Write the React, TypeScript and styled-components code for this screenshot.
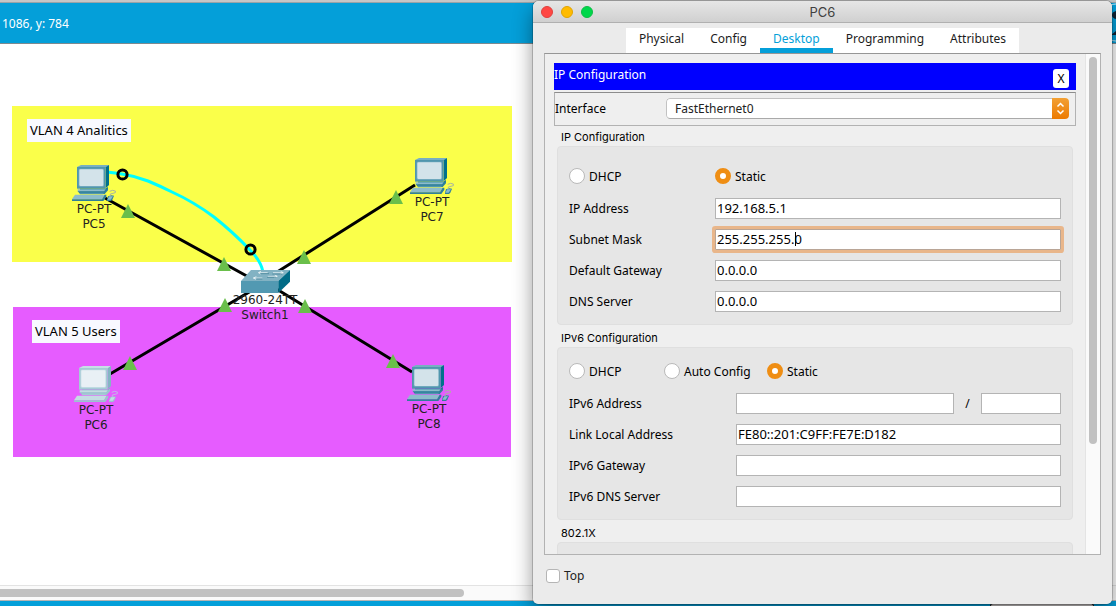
import React from "react";
import styled, { createGlobalStyle } from "styled-components";

const ORANGE = "#ef8e14";
const BLUE = "#049fd9";

const GlobalStyle = createGlobalStyle`
  * { box-sizing: border-box; }
  html, body { margin: 0; overflow: hidden; }
  body, button, input, select {
    font-family: "Noto Sans", "Open Sans", sans-serif;
    font-size: 12px;
    line-height: 15px;
    color: #000;
  }
`;

/* ---------- Workspace behind the dialog ---------- */

const Desktop = styled.div`
  position: relative;
  display: flex;
  flex-direction: column;
  height: 100vh;
  overflow: hidden;
  background: #fff;
`;

const TopEdge = styled.div`
  height: 3px;
  background: #c6c6c6;
  border-bottom: 1px solid #9aa3a8;
`;

const CoordinateBar = styled.header`
  display: flex;
  align-items: center;
  justify-content: space-between;
  height: 41px;
  padding-left: 2px;
  background: ${BLUE};
  border-bottom: 1px solid #7d8a90;
  color: #fff;
`;

const Canvas = styled.main`
  position: relative;
  flex: 1;
  min-height: 0;
  overflow: hidden;
  background: #fff;
`;

const HorizontalTrack = styled.div`
  display: flex;
  align-items: center;
  height: 16px;
  background: #fafafa;
  border-top: 1px solid #e3e3e3;
  border-bottom: 1px solid #b5b5b5;
`;

const HorizontalThumb = styled.div`
  width: 464px;
  height: 8px;
  border-radius: 0 4px 4px 0;
  background: #c1c1c1;
`;

const DeviceBar = styled.footer`
  display: flex;
  justify-content: flex-end;
  height: 5px;
  padding-right: 22px;
  background: ${BLUE};
`;

const DeviceTile = styled.div`
  width: 104px;
  margin-top: 2px;
  border: 1px solid #222;
  border-bottom: 0;
  border-radius: 3px 3px 0 0;
  background: #c9c5c5;
`;

const Zone = styled.div<{ $x: number; $y: number; $w: number; $h: number; $color: string }>`
  position: absolute;
  left: ${(p) => p.$x}px;
  top: ${(p) => p.$y}px;
  width: ${(p) => p.$w}px;
  height: ${(p) => p.$h}px;
  background: ${(p) => p.$color};
`;

const ZoneLabel = styled.div<{ $x: number; $y: number }>`
  position: absolute;
  left: ${(p) => p.$x}px;
  top: ${(p) => p.$y}px;
  padding: 4px 3px;
  background: #f8f9ff;
  font-size: 13px;
  line-height: 15px;
  white-space: nowrap;
`;

const Layer = styled.svg`
  position: absolute;
  left: 0;
  top: 0;
`;

const NodeBox = styled.div<{ $x: number; $y: number }>`
  position: absolute;
  left: ${(p) => p.$x}px;
  top: ${(p) => p.$y}px;
  display: flex;
  flex-direction: column;
  align-items: center;
  width: 80px;
  margin-left: -40px;
  font-family: "DejaVu Sans", sans-serif;
  font-size: 12px;
  line-height: 15px;
  color: #222;
  text-align: center;
  white-space: nowrap;
  svg { display: block; }
`;

function PcIcon({ faded }: { faded?: boolean }) {
  const c = faded
    ? { top: "#c6dfe6", frame: "#a6cbd5", screen: "#e9f0f5", side: "#84b5c3", key: "#c5dce3", edge: "#9cc4cf", cable: "#c3b5e8" }
    : { top: "#78afc2", frame: "#5096ae", screen: "#d3e3ea", side: "#00708c", key: "#8dbccb", edge: "#2f7f9b", cable: "#a9b5a0" };
  return (
    <svg width="44" height="37" viewBox="0 0 132 111">
      <path d="M15 6 27 0H111L101 8H15Z" fill={c.top} />
      <path d="M101 7 111 0V60L101 70Z" fill={c.side} />
      <rect x="15" y="6" width="86" height="65" fill={c.frame} />
      <rect x="20" y="11" width="76" height="54" rx="4" fill={c.top} />
      <rect x="22" y="13" width="72" height="50" rx="4" fill={c.screen} />
      <path d="M24 71H101L108 66V72L99 80H24Z" fill={c.side} />
      <path d="M17 73H102L96 80H17Z" fill={c.key} />
      <path d="M17 79H96L108 68V76L98 87H24Z" fill={c.edge} />
      <path d="M24 83H97L92 88H24Z" fill={c.frame} />
      <path d="M9 89H98L90 103H0Z" fill={c.key} />
      <path d="M0 103H90L98 89H103V95L94 108H0Z" fill={c.edge} />
      <path d="M108 94 118 91 126 92 121 104 117 108H105V104Z" fill={c.edge} />
      <path d="M112 94H123L116 104H106Z" fill={c.key} />
      <path d="M115 92V87L130 83V78L122 76 113 79" fill="none" stroke={c.cable} strokeWidth="3" />
    </svg>
  );
}

function SwitchIcon() {
  return (
    <svg width="49" height="23" viewBox="0 0 147 69">
      <path d="M0 33 30 0H147L112 33Z" fill="#82b2c3" />
      <path d="M0 33H112V69H0Z" fill="#5299b2" />
      <path d="M112 33 147 0V35L112 69Z" fill="#006b87" />
      <g stroke="#fff" strokeWidth="2" fill="none">
        <path d="M80 8H54M60 4 52 8 59 12" />
        <path d="M96 8H126M119 4 127 8 118 12" />
        <path d="M80 19H108M101 15 109 19 100 23" />
        <path d="M64 24H38M46 20 37 24 45 28" />
      </g>
      <path d="M84 11H58M124 12H94M106 22H78M64 27H46" stroke="#3d7c91" strokeWidth="2" />
    </svg>
  );
}

const pcs = [
  { x: 94, y: 121, name: "PC5" },
  { x: 432, y: 114, name: "PC7" },
  { x: 96, y: 322, name: "PC6", faded: true },
  { x: 429, y: 321, name: "PC8" },
];

const arrows = [
  [128, 167], [224, 220], [396, 153], [304, 213],
  [130, 319], [225, 261], [393, 317], [305, 262],
];

function Topology() {
  return (
    <Canvas>
      <Zone $x={12} $y={62} $w={500} $h={156} $color="#faff4a" />
      <Zone $x={13} $y={263} $w={498} $h={150} $color="#e65cff" />
      <ZoneLabel $x={27} $y={75}>VLAN 4 Analitics</ZoneLabel>
      <ZoneLabel $x={32} $y={276}>VLAN 5 Users</ZoneLabel>
      <Layer width="532" height="420" aria-hidden="true">
        <g stroke="#000" strokeWidth="3">
          <path d="M105 154 254 236M415 141 274 230M110 330 256 244M412 328 270 241" />
        </g>
        <path
          d="M107 128 115 129 122 130Q135 132 148 137 160 142 172 148 194 158 214 173 234 189 250 206 261 217 263 228"
          fill="none"
          stroke="#00ffff"
          strokeWidth="3"
        />
      </Layer>
      {pcs.map((pc) => (
        <NodeBox key={pc.name} $x={pc.x} $y={pc.y}>
          <PcIcon faded={pc.faded} />
          <span>PC-PT</span>
          <span>{pc.name}</span>
        </NodeBox>
      ))}
      <NodeBox $x={265} $y={226}>
        <SwitchIcon />
        <span>2960-24TT</span>
        <span>Switch1</span>
      </NodeBox>
      <Layer width="532" height="420" aria-hidden="true">
        {arrows.map(([x, y]) => (
          <path key={`${x}-${y}`} d={`M${x} ${y - 7}l7 14h-14z`} fill="#6abf4b" />
        ))}
        <g fill="none" stroke="#000" strokeWidth="3">
          <circle cx="122.5" cy="130.5" r="4.6" />
          <circle cx="250.5" cy="205.5" r="4.6" />
        </g>
      </Layer>
    </Canvas>
  );
}

/* ---------- Device dialog ---------- */

const Window = styled.section`
  position: absolute;
  left: 533px;
  right: 4px;
  top: 1px;
  bottom: 2px;
  display: flex;
  flex-direction: column;
  border-radius: 6px 6px 5px 5px;
  overflow: hidden;
  background: #ebebeb;
`;

const WindowShadow = styled.div`
  position: absolute;
  left: 533px;
  right: 4px;
  top: 1px;
  bottom: 2px;
  border-radius: 6px;
  box-shadow: 0 0 0 1px rgba(0, 0, 0, 0.18), 0 9px 20px rgba(0, 0, 0, 0.42);
`;

const TitleBar = styled.div`
  display: grid;
  grid-template-columns: 1fr auto 1fr;
  align-items: center;
  height: 22px;
  padding: 0 8px;
  background: linear-gradient(#e6e6e6, #d0d0d0);
  border-bottom: 1px solid #b0b0b0;
`;

const Lights = styled.div`
  display: flex;
  gap: 8px;
`;

const Light = styled.button<{ $color: string; $edge: string }>`
  width: 12px;
  height: 12px;
  padding: 0;
  border: 1px solid ${(p) => p.$edge};
  border-radius: 50%;
  background: ${(p) => p.$color};
`;

const Title = styled.h1`
  margin: 0;
  font: 400 13px/16px Inter, sans-serif;
  color: #404040;
`;

const Tabs = styled.nav`
  display: flex;
  align-self: center;
  margin-top: 5px;
  background: #fff;
`;

const Tab = styled.button<{ $active?: boolean }>`
  height: 25px;
  padding: 0 13px;
  border: 0;
  border-bottom: 5px solid ${(p) => (p.$active ? BLUE : "transparent")};
  background: transparent;
  color: ${(p) => (p.$active ? BLUE : "#1c1c1c")};
`;

const Panel = styled.div`
  display: flex;
  flex: 1;
  min-height: 0;
  margin: 0 11px;
  border: 1px solid #b2b2b2;
  border-top-color: #969696;
  background: #efefef;
  overflow: hidden;
`;

const PanelBody = styled.div`
  flex: 1;
  min-width: 0;
  padding: 9px;
  overflow: hidden;
`;

const VerticalTrack = styled.div`
  width: 15px;
  padding: 3px;
  background: #fafafa;
  border-left: 1px solid #e4e4e4;
`;

const VerticalThumb = styled.div`
  width: 8px;
  height: 387px;
  border-radius: 4px;
  background: #c1c1c1;
`;

const ConfigBar = styled.div`
  display: flex;
  justify-content: space-between;
  height: 27px;
  padding-right: 7px;
  background: #0000ff;
  color: #fff;
`;

const ConfigTitle = styled.h2`
  margin: 4px 0 0;
  font-size: 12px;
  font-weight: 400;
  line-height: 15px;
`;

const CloseButton = styled.button`
  align-self: flex-end;
  width: 16px;
  height: 19px;
  margin-bottom: 2px;
  padding: 0;
  border: 0;
  border-radius: 3px;
  background: #fff;
`;

const InterfaceRow = styled.div`
  display: flex;
  align-items: center;
  height: 34px;
  margin-top: 2px;
  padding: 0 6px 2px 0;
  border: 1px solid #b2b2b2;
  border-top-color: #8c8c8c;
`;

const InterfaceLabel = styled.label`
  width: 111px;
`;

const SelectFrame = styled.div`
  display: flex;
  flex: 1;
  height: 21px;
  border-radius: 4px;
  overflow: hidden;
  background: #fff;
`;

const InterfaceSelect = styled.select`
  flex: 1;
  appearance: none;
  padding: 0 8px;
  border: 1px solid #c2c2c2;
  border-bottom-color: #a9a9a9;
  border-right: 0;
  border-radius: 4px 0 0 4px;
  background: #fff;
  color: #222;
`;

const SelectArrows = styled.svg`
  width: 17px;
  height: 21px;
  background: linear-gradient(#f2a035, #ec7a00);
`;

const GroupTitle = styled.h3`
  margin: 0 7px;
  padding: 3px 0 1px;
  font: 400 11px/16px Inter, sans-serif;
`;

const Group = styled.div<{ $top?: number }>`
  display: grid;
  gap: 10px;
  margin: 0 3px 2px;
  padding: ${(p) => p.$top ?? 12}px 11px 12px;
  background: #e6e6e6;
  border: 1px solid #dfdfdf;
  border-radius: 4px;
`;

const RadioRow = styled.div<{ $columns: string }>`
  display: grid;
  grid-template-columns: ${(p) => p.$columns};
  align-items: center;
  height: 24px;
`;

const RadioLabel = styled.label`
  display: flex;
  align-items: center;
  gap: 4px;
`;

const Radio = styled.input.attrs({ type: "radio" })`
  appearance: none;
  width: 16px;
  height: 16px;
  margin: 0;
  border: 1px solid #b9b9b9;
  border-radius: 50%;
  background: #fff;
  &:checked {
    border: 5px solid ${ORANGE};
  }
`;

const FieldRow = styled.div<{ $label: number }>`
  display: grid;
  grid-template-columns: ${(p) => p.$label}px 1fr;
  align-items: center;
  height: 21px;
`;

const TextInput = styled.input<{ $focused?: boolean }>`
  display: block;
  width: 100%;
  height: 21px;
  padding: 0 1px 2px;
  border: 1px solid ${(p) => (p.$focused ? "#b9a596" : "#b4b4b4")};
  border-radius: 0;
  outline: none;
  background: #fff;
  font-size: 13px;
  ${(p) => p.$focused && "box-shadow: 0 0 0 3px #e9b68a; border-radius: 1px;"}
`;

const CaretHost = styled.div`
  position: relative;
`;

const Caret = styled.span`
  position: absolute;
  left: 80px;
  top: 3px;
  width: 1px;
  height: 14px;
  background: #000;
`;

const PrefixFields = styled.div`
  display: grid;
  grid-template-columns: 1fr 27px 80px;
  text-align: center;
  align-items: center;
`;

const Footer = styled.div`
  display: flex;
  align-items: center;
  height: 49px;
  padding: 0 13px 8px;
`;

const CheckLabel = styled.label`
  display: flex;
  align-items: center;
  gap: 4px;
  color: #222;
`;

const Checkbox = styled.input.attrs({ type: "checkbox" })`
  appearance: none;
  width: 14px;
  height: 14px;
  margin: 0;
  border: 1px solid #b5b5b5;
  border-radius: 3px;
  background: #fff;
`;

interface FieldProps {
  id: string;
  label: string;
  value?: string;
  labelWidth: number;
  focused?: boolean;
}

function Field({ id, label, value = "", labelWidth, focused }: FieldProps) {
  return (
    <FieldRow $label={labelWidth}>
      <label htmlFor={id}>{label}</label>
      <CaretHost>
        <TextInput id={id} type="text" defaultValue={value} $focused={focused} />
        {focused && <Caret />}
      </CaretHost>
    </FieldRow>
  );
}

function DeviceWindow() {
  return (
    <Window aria-label="PC6">
      <TitleBar>
        <Lights>
          <Light $color="#ff4744" $edge="#e0403d" aria-label="Close" />
          <Light $color="#ffbb00" $edge="#e0a400" aria-label="Minimize" />
          <Light $color="#00d74b" $edge="#0dbd45" aria-label="Zoom" />
        </Lights>
        <Title>PC6</Title>
      </TitleBar>
      <Tabs>
        <Tab>Physical</Tab>
        <Tab>Config</Tab>
        <Tab $active>Desktop</Tab>
        <Tab>Programming</Tab>
        <Tab>Attributes</Tab>
      </Tabs>
      <Panel>
        <PanelBody>
          <ConfigBar>
            <ConfigTitle>IP Configuration</ConfigTitle>
            <CloseButton>X</CloseButton>
          </ConfigBar>
          <InterfaceRow>
            <InterfaceLabel htmlFor="interface">Interface</InterfaceLabel>
            <SelectFrame>
              <InterfaceSelect id="interface">
                <option>FastEthernet0</option>
              </InterfaceSelect>
              <SelectArrows viewBox="0 0 17 21" aria-hidden="true">
                <path d="M5.5 8.5 8.5 5.5 11.5 8.5M5.5 12.5 8.5 15.5 11.5 12.5" fill="none" stroke="#fff" strokeWidth="1.5" />
              </SelectArrows>
            </SelectFrame>
          </InterfaceRow>

          <GroupTitle>IP Configuration</GroupTitle>
          <Group $top={17}>
            <RadioRow $columns="146px 1fr">
              <RadioLabel><Radio name="ipv4" />DHCP</RadioLabel>
              <RadioLabel><Radio name="ipv4" defaultChecked />Static</RadioLabel>
            </RadioRow>
            <Field id="ip" label="IP Address" value="192.168.5.1" labelWidth={146} />
            <Field id="mask" label="Subnet Mask" value="255.255.255.0" labelWidth={146} focused />
            <Field id="gateway" label="Default Gateway" value="0.0.0.0" labelWidth={146} />
            <Field id="dns" label="DNS Server" value="0.0.0.0" labelWidth={146} />
          </Group>

          <GroupTitle>IPv6 Configuration</GroupTitle>
          <Group $top={11}>
            <RadioRow $columns="95px 103px 1fr">
              <RadioLabel><Radio name="ipv6" />DHCP</RadioLabel>
              <RadioLabel><Radio name="ipv6" />Auto Config</RadioLabel>
              <RadioLabel><Radio name="ipv6" defaultChecked />Static</RadioLabel>
            </RadioRow>
            <FieldRow $label={167}>
              <label htmlFor="ip6">IPv6 Address</label>
              <PrefixFields>
                <TextInput id="ip6" type="text" />
                <span>/</span>
                <TextInput type="text" aria-label="Prefix length" />
              </PrefixFields>
            </FieldRow>
            <Field id="link" label="Link Local Address" value="FE80::201:C9FF:FE7E:D182" labelWidth={167} />
            <Field id="gateway6" label="IPv6 Gateway" labelWidth={167} />
            <Field id="dns6" label="IPv6 DNS Server" labelWidth={167} />
          </Group>

          <GroupTitle>802.1X</GroupTitle>
          <Group />
        </PanelBody>
        <VerticalTrack>
          <VerticalThumb />
        </VerticalTrack>
      </Panel>
      <Footer>
        <CheckLabel><Checkbox />Top</CheckLabel>
      </Footer>
    </Window>
  );
}

export default function App() {
  return (
    <Desktop>
      <GlobalStyle />
      <TopEdge />
      <CoordinateBar>
        <span>1086, y: 784</span>
        <svg width="5" height="40" viewBox="0 0 5 40" aria-hidden="true">
          <path d="M0 2Q3 1 5 1M0 37Q3 38 5 38" stroke="#bfe6f5" fill="none" />
          <path d="M5 8Q1 9 1 12T5 16ZM5 28 0 32H5Z" fill="#123" />
        </svg>
      </CoordinateBar>
      <Topology />
      <HorizontalTrack>
        <HorizontalThumb />
      </HorizontalTrack>
      <DeviceBar>
        <DeviceTile />
      </DeviceBar>
      <WindowShadow />
      <DeviceWindow />
    </Desktop>
  );
}
